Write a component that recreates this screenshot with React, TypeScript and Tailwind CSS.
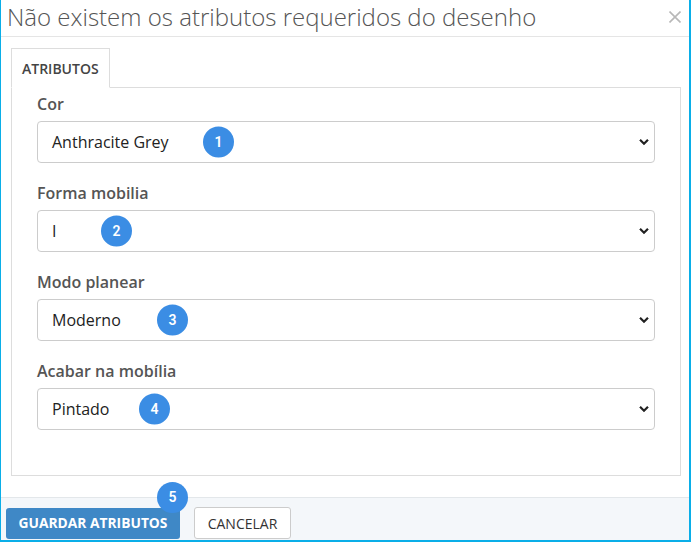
import React from "react";

const Badge = ({ n, className }: { n: number; className: string }) => (
  <div
    className={`absolute flex h-[31px] w-[31px] items-center justify-center rounded-full bg-[#3b8de4] text-[14px] font-semibold text-white ${className}`}
    style={{ fontFamily: "Roboto, 'Open Sans', sans-serif" }}
  >
    {n}
  </div>
);

const Chevron = () => (
  <svg width="10" height="7" viewBox="0 0 10 7" className="absolute right-0 top-1/2 -translate-y-1/2">
    <path d="M1 1.2 L5 5.2 L9 1.2" fill="none" stroke="#222" strokeWidth="2.2" />
  </svg>
);

const Field = ({
  label,
  value,
  n,
  badgeLeft,
}: {
  label: string;
  value: string;
  n: number;
  badgeLeft: string;
}) => (
  <div className="flex flex-col">
    <div className="h-[27px] text-[16px] font-semibold leading-[21px] text-[#555]">{label}</div>
    <div className="relative flex h-[42px] items-center rounded-[4px] border border-[#ccc] bg-white pl-[14px] pr-[5px] text-[16px] text-[#222]">
      <span>{value}</span>
      <div className="relative ml-auto h-full w-[14px]">
        <Chevron />
      </div>
      <Badge n={n} className={`${badgeLeft} top-1/2 -translate-y-1/2`} />
    </div>
  </div>
);

export default function App() {
  return (
    <div
      className="flex h-[542px] w-[691px] flex-col border-b-2 border-l border-r-2 border-[#0aaee8] bg-white"
      style={{ fontFamily: "'Open Sans', sans-serif" }}
    >
      <div className="flex h-[37px] shrink-0 items-start justify-between border-b border-[#e5e5e5] pl-[6px] pr-[8px]">
        <div className="pt-[1px] text-[24px] font-light leading-[32px] text-[#555]">
          Não existem os atributos requeridos do desenho
        </div>
        <svg width="12" height="12" viewBox="0 0 12 12" className="mt-[11px]">
          <path d="M0.5 0.5 L11.5 11.5 M11.5 0.5 L0.5 11.5" stroke="#b8b8b8" strokeWidth="1.6" fill="none" />
        </svg>
      </div>
      <div className="flex flex-1 flex-col pl-[10px] pr-[8px] pt-[11px]">
        <div className="flex">
          <div className="relative -mb-px flex h-[40px] w-[99px] items-center border border-b-white border-[#ddd] bg-white pl-[10px] text-[14px] font-semibold text-[#444]">
            ATRIBUTOS
          </div>
        </div>
        <div className="flex h-[389px] flex-col gap-[20px] border border-[#ddd] pl-[25px] pr-[25px] pt-[6px]">
          <Field label="Cor" value="Anthracite Grey" n={1} badgeLeft="left-[165px]" />
          <Field label="Forma mobilia" value="I" n={2} badgeLeft="left-[63px]" />
          <Field label="Modo planear" value="Moderno" n={3} badgeLeft="left-[119px]" />
          <Field label="Acabar na mobília" value="Pintado" n={4} badgeLeft="left-[101px]" />
        </div>
      </div>
      <div className="relative flex h-[43px] shrink-0 items-end gap-[14px] border-t border-[#e3e7ea] bg-[#f4f7fa] pb-[1px] pl-[5px]">
        <button className="h-[31px] w-[174px] rounded-[3px] bg-[#3f88c6] text-[13.8px] font-bold text-white">
          GUARDAR ATRIBUTOS
        </button>
        <button className="h-[32px] w-[97px] rounded-[3px] border border-[#ccc] bg-white text-[14px] text-[#333]">
          CANCELAR
        </button>
        <Badge n={5} className="left-[156px] top-[-16px]" />
      </div>
    </div>
  );
}
